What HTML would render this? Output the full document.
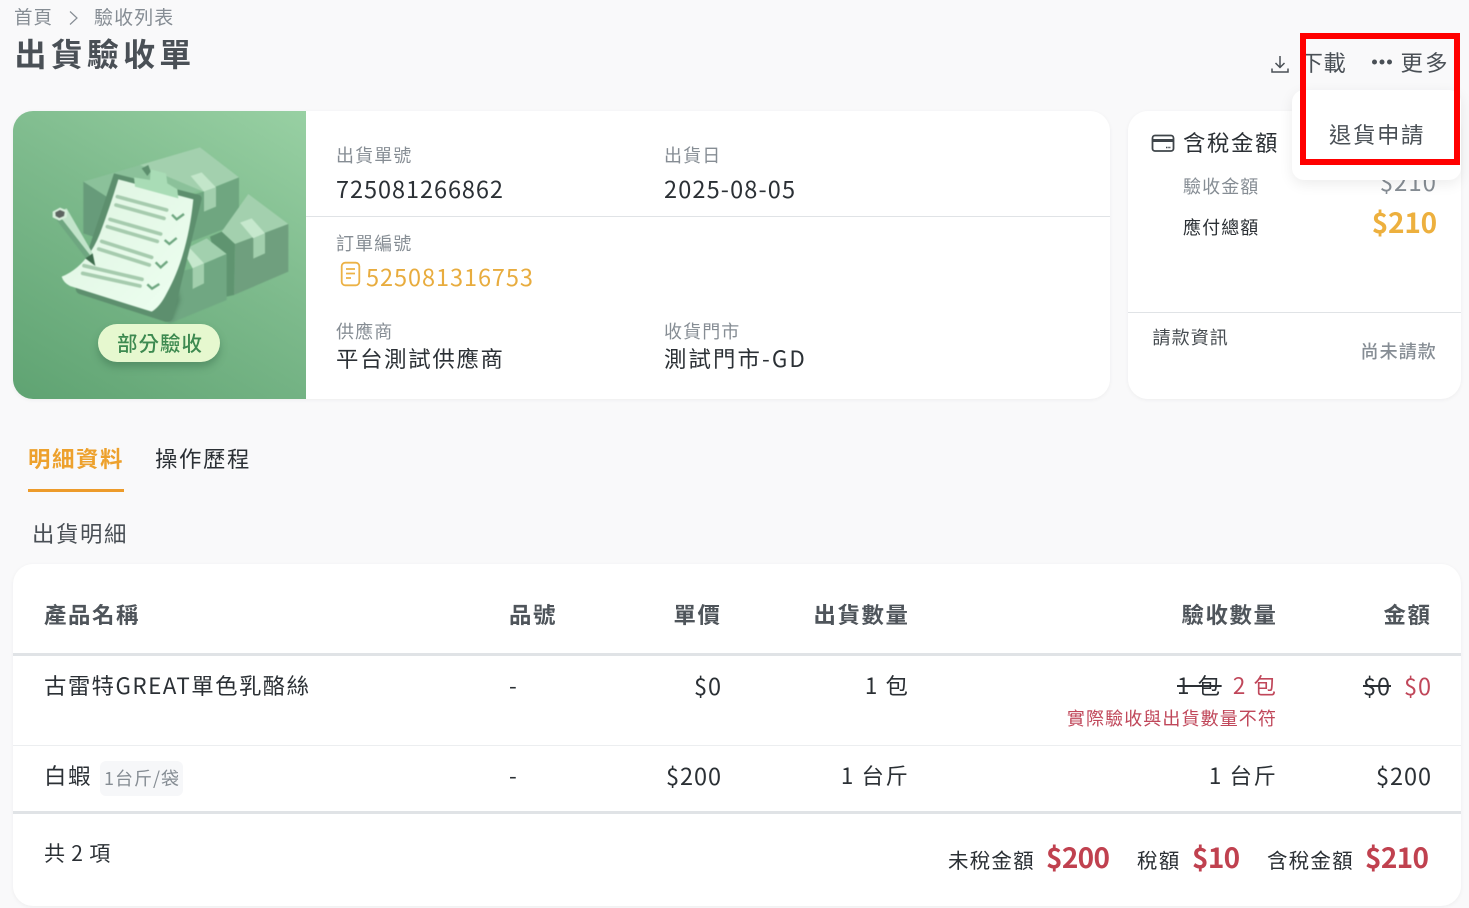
<!DOCTYPE html>
<html lang="zh-Hant"><head><meta charset="utf-8"><title>出貨驗收單</title>
<style>
html,body{margin:0;padding:0}
body{width:1469px;height:908px;overflow:hidden;background:#f9f9fa;position:relative;font-family:"Noto Sans CJK TC","Liberation Sans",sans-serif;color:#2b3035;font-weight:400}
.t{position:absolute;white-space:nowrap;line-height:32px;height:32px;letter-spacing:1.6px;font-size:22.4px;margin-top:-2px}
.d{font-size:23.5px;letter-spacing:.95px}
.r{text-align:right}
.g{color:#868d94}
.s{font-size:18px;letter-spacing:1.1px;margin-top:0}
.m{font-weight:700;color:#4f555b}
.red{color:#c0475a}
.b{font-weight:700;font-size:28px;color:#c0414f;letter-spacing:-.7px;margin-top:-4px}
.card{position:absolute;background:#fff;border-radius:20px;box-shadow:0 1px 4px rgba(0,0,0,.05)}
.l{position:absolute;background:#e0e3e6}
</style></head><body>

<div class="t s g" style="left:14px;top:1px;font-size:18.5px;letter-spacing:1px">首頁</div>
<svg style="position:absolute;left:68px;top:10px" width="12" height="16" viewBox="0 0 12 16"><path d="M2 1.500 9 8 2 14.500" fill="none" stroke="#868d94" stroke-width="1.200"/></svg>
<div class="t s g" style="left:94px;top:1px;font-size:19px;letter-spacing:1.100px">驗收列表</div>
<div class="t" style="left:14.500px;top:35px;font-size:32px;line-height:40px;height:40px;letter-spacing:4.200px;font-weight:700;color:#4a5056">出貨驗收單</div>

<svg style="position:absolute;left:1270px;top:54px" width="20" height="20" viewBox="0 0 20 20"><path d="M10 2v11M5.500 9 10 13.500 14.500 9M2 14.500V18h16v-3.500" fill="none" stroke="#4a5056" stroke-width="1.500"/></svg>
<div class="t" style="left:1300.500px;top:48px;letter-spacing:.5px;color:#4a5056">下載</div>
<svg style="position:absolute;left:1371px;top:58px" width="22" height="8" viewBox="0 0 22 8"><circle cx="3.500" cy="4" r="2.500" fill="#4a5056"/><circle cx="11" cy="4" r="2.500" fill="#4a5056"/><circle cx="18.500" cy="4" r="2.500" fill="#4a5056"/></svg>
<div class="t" style="left:1400.500px;top:48px;color:#4a5056;letter-spacing:2.400px">更多</div>

<div class="card" style="left:13px;top:111px;width:1097px;height:288px">
  <div style="position:absolute;left:0;top:0;width:293px;height:288px;border-radius:20px 0 0 20px;overflow:hidden;background:linear-gradient(30deg,#5fa372 0%,#7dba8c 55%,#98d0a3 100%)">
  <svg style="position:absolute;left:27px;top:29px;filter:blur(.4px)" width="260" height="190" viewBox="0 0 780 570">
    <defs><linearGradient id="pp" x1="0" y1="0" x2="1" y2="1"><stop offset="0" stop-color="#def4e1"/><stop offset="1" stop-color="#eefff1"/></linearGradient>
    <filter id="sh" x="-20%" y="-20%" width="140%" height="140%"><feGaussianBlur stdDeviation="7"/></filter></defs>
    <polygon points="130,125 300,75 480,150 300,220 190,220" fill="#8bc19a"/>
    <polygon points="130,125 215,180 190,300 130,280" fill="#679b7a"/>
    <polygon points="300,75 480,22 597,112 490,155" fill="#a3d0ae"/>
    <polygon points="490,155 597,112 597,250 440,310 440,170" fill="#6fa680"/>
    <polygon points="452,108 485,97 528,142 492,155" fill="#c3e6ca"/>
    <polygon points="492,155 528,142 528,200 492,215" fill="#a2cfad"/>
    <polygon points="545,275 625,162 745,252 585,312" fill="#a3d0ae"/>
    <polygon points="585,312 745,252 745,395 582,465" fill="#6f9f7e"/>
    <polygon points="510,290 545,275 585,312 582,465 560,470 520,330" fill="#5f9470"/>
    <polygon points="600,248 635,235 675,280 640,295" fill="#c6e8cd"/>
    <polygon points="640,295 675,280 675,340 640,356" fill="#a2cfad"/>
    <polygon points="440,325 500,295 560,342 458,385" fill="#a2d0ae"/>
    <polygon points="458,385 560,342 560,480 385,552 400,400" fill="#70a782"/>
    <polygon points="430,335 450,325 492,370 458,385" fill="#c6e8cd"/>
    <polygon points="458,385 492,370 492,430 458,447" fill="#a2cfad"/>
    <path d="M340 510 400 400 420 480 395 545Z" fill="#3f6b50" opacity=".55" filter="url(#sh)"/>
    <polygon points="305,85 325,75 332,95 322,108" fill="#5d8f6e"/>
    <path d="M222 100 478 165Q488 170 484 182L398 535Q392 548 375 545L118 462Q104 455 108 440Z" fill="#5d8f6e"/>
    <path d="M235 118 460 178C450 280 425 380 380 460Q360 500 335 515L90 438Q70 428 65 410Q140 380 180 280Q210 200 235 118Z" fill="url(#pp)"/>
    <path d="M282 112 330 120 332 88 378 100 382 130 412 148 415 175 285 140Z" fill="#a9dcb6"/>
    <g stroke="#a6cbae" stroke-width="11" stroke-linecap="round" fill="none">
      <path d="M232 170 380 210M228 195 372 235M210 238 362 282M202 260 352 304M185 304 335 352M176 327 328 375M132 377 306 418M128 400 300 438"/>
    </g>
    <g stroke="#6ea680" stroke-width="7" fill="none">
      <path d="M396 224 410 238 432 222M374 300 388 312 410 294M347 367 362 382 382 364M322 433 336 446 358 432"/>
    </g>
    <polygon points="38,225 80,205 158,340 140,352" fill="#c2e4ca"/>
    <polygon points="38,225 62,232 150,345 138,355" fill="#6ea680"/>
    <polygon points="136,355 158,340 166,378" fill="#3d6b4c"/>
    <polygon points="38,215 60,203 82,212 80,232 58,242 38,232" fill="#d8efdc"/>
    <polygon points="46,217 60,210 74,216 72,228 58,234 47,228" fill="#5d6460"/>
  </svg>
  <div style="position:absolute;left:85px;top:213px;width:122px;height:38px;border-radius:19px;background:#e6f8cf;box-shadow:0 5px 8px rgba(40,90,60,.35)"></div>
  <div class="t" style="left:104px;top:217px;color:#3d8a50;font-weight:500;font-size:20.500px;letter-spacing:1px">部分驗收</div>
  </div>
</div>
<div class="l" style="left:306px;top:216px;width:804px;height:1px"></div>

<div class="t s g" style="left:336px;top:139px">出貨單號</div>
<div class="t d" style="left:336px;top:174px">725081266862</div>
<div class="t s g" style="left:664px;top:139px">出貨日</div>
<div class="t d" style="left:664px;top:174px;letter-spacing:1.150px">2025-08-05</div>
<div class="t s g" style="left:336px;top:227px">訂單編號</div>
<svg style="position:absolute;left:340px;top:261px" width="21" height="26" viewBox="0 0 21 26"><rect x="1.700" y="1.700" width="17.600" height="22.600" rx="3.500" fill="none" stroke="#ecb246" stroke-width="1.800"/><path d="M6 8h9M6 12.500h9M6 17h5" stroke="#ecb246" stroke-width="1.800"/></svg>
<div class="t d" style="left:366px;top:262px;color:#e8ac3e">525081316753</div>
<div class="t s g" style="left:336px;top:315px">供應商</div>
<div class="t s g" style="left:664px;top:315px">收貨門市</div>
<div class="t" style="left:336px;top:344px;letter-spacing:1.700px">平台測試供應商</div>
<div class="t" style="left:664px;top:344px;letter-spacing:2.100px">測試門市-GD</div>

<div class="card" style="left:1128px;top:111px;width:333px;height:288px"></div>
<svg style="position:absolute;left:1151px;top:134px" width="24" height="19" viewBox="0 0 24 19"><rect x="1.500" y="1.500" width="21" height="15.500" rx="2.500" fill="none" stroke="#3f454a" stroke-width="1.800"/><path d="M1.500 6.500h21" stroke="#3f454a" stroke-width="3"/><path d="M15 13.500h5" stroke="#3f454a" stroke-width="1.500" stroke-dasharray="1.500 0.800"/></svg>
<div class="t" style="left:1183px;top:128px">含稅金額</div>
<div class="t s g" style="left:1183px;top:170px">驗收金額</div>
<div class="t r g" style="right:32px;top:167px;font-size:24px;letter-spacing:1px">$210</div>
<div class="t s" style="left:1183px;top:211px">應付總額</div>
<div class="t r" style="right:32px;top:208px;font-size:28px;font-weight:700;color:#edb03e;letter-spacing:-.2px">$210</div>
<div class="l" style="left:1128px;top:312px;width:333px;height:1px"></div>
<div class="t s" style="left:1152.500px;top:321px;color:#454b50">請款資訊</div>
<div class="t s g" style="left:1360.500px;top:335px;font-weight:500">尚未請款</div>

<div style="position:absolute;left:1292px;top:90px;width:169px;height:90px;border-radius:12px;background:#fff;box-shadow:0 4px 14px rgba(0,0,0,.08)"></div>
<div class="t" style="left:1329px;top:120px;color:#4a5056">退貨申請</div>
<div style="position:absolute;left:1300px;top:33px;width:148px;height:120px;border:6px solid #f00"></div>

<div class="t" style="left:28px;top:444px;color:#eda12d;font-weight:700">明細資料</div>
<div class="t" style="left:155px;top:444px">操作歷程</div>
<div style="position:absolute;left:28px;top:489px;width:96px;height:3px;background:#ed9b2a"></div>
<div class="t" style="left:32px;top:519px;color:#4a5056">出貨明細</div>

<div class="card" style="left:13px;top:564px;width:1448px;height:342px"></div>
<div class="t m" style="left:44px;top:600px">產品名稱</div>
<div class="t m" style="left:509px;top:600px">品號</div>
<div class="t m r" style="right:747.500px;top:600px">單價</div>
<div class="t m r" style="right:559.500px;top:600px">出貨數量</div>
<div class="t m r" style="right:191.500px;top:600px">驗收數量</div>
<div class="t m r" style="right:37.500px;top:600px">金額</div>
<div class="l" style="left:13px;top:653px;width:1448px;height:3px"></div>

<div class="t" style="left:44px;top:671px;letter-spacing:1.450px">古雷特GREAT單色乳酪絲</div>
<div class="t" style="left:509px;top:671px">-</div>
<div class="t d r" style="right:747px;top:671px">$0</div>
<div class="t r" style="right:559.500px;top:671px">1 包</div>
<div class="t" style="left:1177px;top:671px;text-decoration:line-through">1 包</div>
<div class="t r red" style="right:191.500px;top:671px">2 包</div>
<div class="t s red r" style="right:192px;top:702px">實際驗收與出貨數量不符</div>
<div class="t d" style="left:1363px;top:671px;text-decoration:line-through">$0</div>
<div class="t d r red" style="right:37px;top:671px">$0</div>
<div class="l" style="left:13px;top:745px;width:1448px;height:1px;background:#eceef0"></div>

<div class="t" style="left:44px;top:761px">白蝦</div>
<div style="position:absolute;left:100px;top:761px;width:83px;height:35px;border-radius:6px;background:#f6f7f9"></div>
<div class="t s g" style="left:104px;top:762px;letter-spacing:1px">1台斤/袋</div>
<div class="t" style="left:509px;top:761px">-</div>
<div class="t d r" style="right:747px;top:761px">$200</div>
<div class="t r" style="right:559.500px;top:761px">1 台斤</div>
<div class="t r" style="right:191.500px;top:761px">1 台斤</div>
<div class="t d r" style="right:37px;top:761px">$200</div>
<div class="l" style="left:13px;top:811px;width:1448px;height:3px"></div>

<div class="t" style="left:44px;top:839px;font-size:21px;letter-spacing:.8px">共 2 項</div>
<div class="t" style="left:948px;top:845px;font-size:20.500px;letter-spacing:1.200px">未稅金額</div>
<div class="t b" style="left:1046px;top:845px">$200</div>
<div class="t" style="left:1137px;top:845px;font-size:20.500px;letter-spacing:1.200px">稅額</div>
<div class="t b" style="left:1192px;top:845px">$10</div>
<div class="t" style="left:1267px;top:845px;font-size:20.500px;letter-spacing:1.200px">含稅金額</div>
<div class="t b" style="left:1365px;top:845px">$210</div>
</body></html>
